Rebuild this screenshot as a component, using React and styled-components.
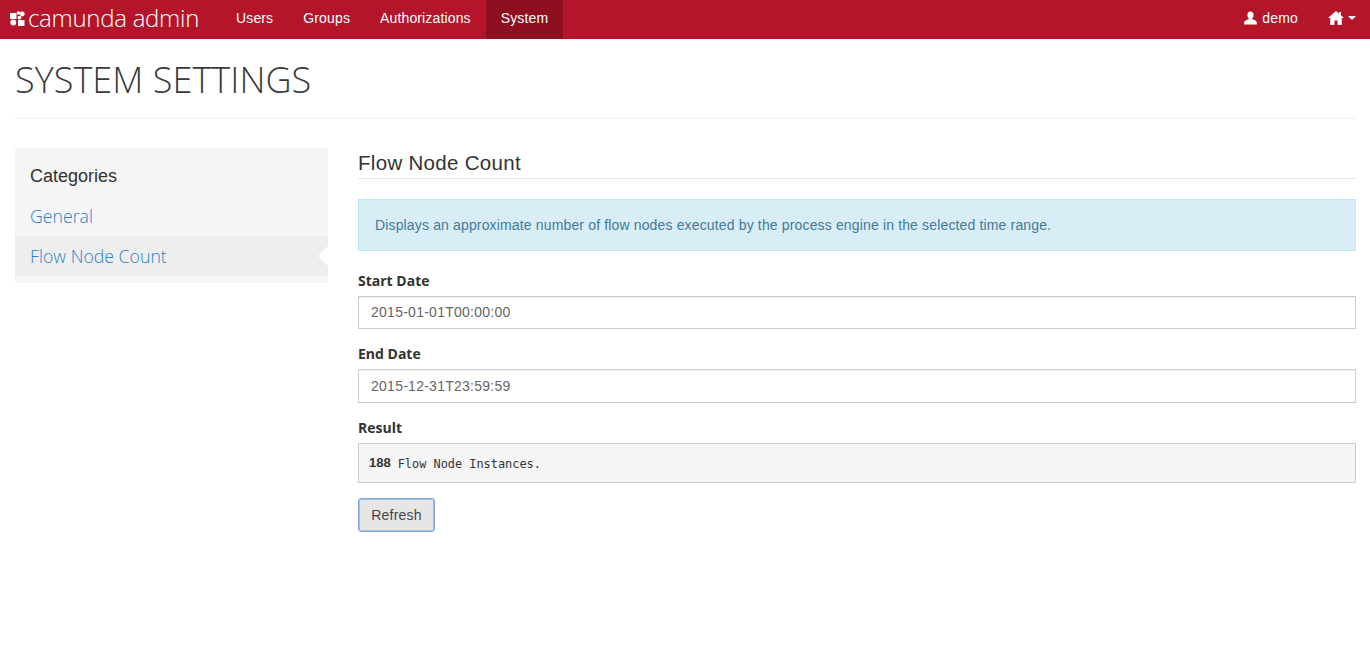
import React from "react";
import styled, { createGlobalStyle } from "styled-components";

const Global = createGlobalStyle`
  html, body { margin: 0; padding: 0; background: #fff; }
  body { font-family: "Liberation Sans", Arial, sans-serif; font-size: 14px; color: #333; line-height: 20px; }
  * { box-sizing: border-box; }
`;

const Navbar = styled.nav`
  height: 39px;
  background: #b5152b;
  display: flex;
  align-items: stretch;
  color: #fff;
`;
const Brand = styled.a`
  display: flex;
  align-items: center;
  gap: 3px;
  padding: 0 0 3px 10px;
  width: 221px;
  font-family: "Open Sans", sans-serif;
  font-weight: 300;
  font-size: 24px;
  letter-spacing: -0.28px;
  color: #fff;
`;
const NavList = styled.div`
  display: flex;
  align-items: stretch;
`;
const NavItem = styled.a`
  display: flex;
  align-items: center;
  padding: 0 15px 3px;
  letter-spacing: 0.14px;
  color: #fff;
  background: ${(p) => (p.$active ? "#8e0f20" : "transparent")};
`;
const NavRight = styled.div`
  margin-left: auto;
  display: flex;
  align-items: center;
  padding: 0 14px 3px 0;
`;
const UserLink = styled.a`
  display: flex;
  align-items: center;
  gap: 5px;
  margin-right: 30px;
  letter-spacing: 0.16px;
  color: #fff;
`;
const HomeLink = styled.a`
  display: flex;
  align-items: center;
  gap: 4px;
`;
const Caret = styled.span`
  border-top: 4px solid #fff;
  border-left: 4px solid transparent;
  border-right: 4px solid transparent;
`;
const Main = styled.main`
  padding: 0 14px 0 15px;
`;
const PageHeader = styled.header`
  height: 80px;
  border-bottom: 1px solid #eee;
  padding-top: 17px;
`;
const PageTitle = styled.h1`
  margin: 0;
  font-family: "Open Sans", sans-serif;
  font-weight: 300;
  font-size: 36px;
  line-height: 48px;
  letter-spacing: 0.05px;
  color: #3a3a3a;
  text-transform: uppercase;
`;
const Columns = styled.div`
  display: grid;
  grid-template-columns: 313px 1fr;
  column-gap: 30px;
  margin-top: 29px;
`;
const Sidebar = styled.aside`
  background: #f5f5f5;
  height: 135px;
  padding: 8px 0 7px;
  align-self: start;
`;
const SideHead = styled.div`
  font-family: "Liberation Sans", Arial, sans-serif;
  font-size: 18px;
  line-height: 40px;
  padding-left: 15px;
  color: #333;
`;
const SideItem = styled.a`
  display: block;
  position: relative;
  height: 40px;
  line-height: 40px;
  padding-left: 15px;
  font-family: "Open Sans", sans-serif;
  font-weight: 300;
  font-size: 17.7px;
  color: #2a7fd0;
  background: ${(p) => (p.$active ? "#eeeeee" : "transparent")};
  ${(p) =>
    p.$active &&
    `&::after {
      content: "";
      position: absolute;
      right: 0;
      top: 10px;
      border-top: 10px solid transparent;
      border-bottom: 10px solid transparent;
      border-right: 10px solid #fff;
    }`}
`;
const Content = styled.section`
  min-width: 0;
`;
const SectionTitle = styled.h3`
  margin: 0;
  height: 31px;
  font-family: "Liberation Sans", Arial, sans-serif;
  font-weight: 400;
  font-size: 20.5px;
  line-height: 30px;
  letter-spacing: 0.3px;
  border-bottom: 1px solid #e5e5e5;
  color: #333;
`;
const Alert = styled.div`
  margin-top: 20px;
  height: 52px;
  padding: 0 15px 0 16px;
  display: flex;
  align-items: center;
  background: #d9edf7;
  border: 1px solid #bce8f1;
  letter-spacing: 0.15px;
  color: #3f7b99;
`;
const Field = styled.div`
  margin-top: 19.6px;
  & + & { margin-top: 15px; }
`;
const Label = styled.label`
  display: block;
  font-family: "Open Sans", sans-serif;
  font-weight: 700;
  font-size: 14px;
  line-height: 20px;
  margin-bottom: 5px;
  color: #333;
`;
const Input = styled.input`
  display: block;
  width: 100%;
  height: 33.6px;
  padding: 5px 12px;
  border: 1px solid #ccc;
  box-shadow: inset 0 1px 1px rgba(0, 0, 0, 0.075);
  font-family: "Liberation Sans", Arial, sans-serif;
  font-size: 14px;
  letter-spacing: 0.26px;
  color: #666;
  background: #fff;
  outline: none;
  border-radius: 0;
`;
const ResultBox = styled.div`
  height: 40px;
  padding: 2px 10px 0;
  display: flex;
  align-items: center;
  gap: 7px;
  background: #f5f5f5;
  border: 1px solid #ccc;
`;
const Count = styled.strong`
  font-family: "Liberation Sans", Arial, sans-serif;
  font-size: 13px;
  margin-top: -2px;
  color: #333;
`;
const Mono = styled.span`
  font-family: "DejaVu Sans Mono", monospace;
  font-size: 11.9px;
  color: #333;
`;
const Button = styled.button`
  display: block;
  margin-top: 15px;
  height: 34px;
  width: 77px;
  padding: 0;
  background: #e6e6e6;
  border: 1px solid #7fa6e6;
  border-radius: 3px;
  box-shadow: inset 0 0 0 1px #a9bbd8;
  font-family: "Liberation Sans", Arial, sans-serif;
  font-size: 14px;
  letter-spacing: 0.2px;
  color: #444;
`;

const Logo = () => (
  <svg width="15" height="15" viewBox="0 0 15 15" fill="#fff">
    <rect x="0" y="2" width="6.5" height="6" />
    <circle cx="8.5" cy="2" r="1.8" />
    <circle cx="12.3" cy="3" r="2.4" />
    <circle cx="9.5" cy="6.6" r="1.9" />
    <circle cx="3.3" cy="11.5" r="2.9" />
    <rect x="8" y="9" width="6.5" height="6" />
  </svg>
);
const UserIcon = () => (
  <svg width="13" height="14" viewBox="0 0 14 14" fill="#fff">
    <path d="M7 0C4.9 0 3.7 1.6 3.7 3.7c0 1.5.6 2.9 1.5 3.6v.9C3.5 9.2.4 9.7.2 11.8V14h13.6v-2.2c-.2-2.1-3.3-2.6-5-3.6v-.9c.9-.7 1.5-2.1 1.5-3.6C10.3 1.6 9.1 0 7 0z" />
  </svg>
);
const HomeIcon = () => (
  <svg width="16" height="14" viewBox="0 0 16 14" fill="#fff">
    <path d="M8 0L0 7h2.2v7h4.3V9.5h3V14h4.3V7H16l-3-2.6V1h-2v1.7z" />
  </svg>
);

export default function App() {
  return (
    <>
      <Global />
      <Navbar>
        <Brand>
          <Logo />
          camunda admin
        </Brand>
        <NavList>
          <NavItem>Users</NavItem>
          <NavItem>Groups</NavItem>
          <NavItem>Authorizations</NavItem>
          <NavItem $active>System</NavItem>
        </NavList>
        <NavRight>
          <UserLink>
            <UserIcon />
            demo
          </UserLink>
          <HomeLink>
            <HomeIcon />
            <Caret />
          </HomeLink>
        </NavRight>
      </Navbar>
      <Main>
        <PageHeader>
          <PageTitle>System Settings</PageTitle>
        </PageHeader>
        <Columns>
          <Sidebar>
            <SideHead>Categories</SideHead>
            <SideItem>General</SideItem>
            <SideItem $active>Flow Node Count</SideItem>
          </Sidebar>
          <Content>
            <SectionTitle>Flow Node Count</SectionTitle>
            <Alert>Displays an approximate number of flow nodes executed by the process engine in the selected time range.</Alert>
            <Field>
              <Label>Start Date</Label>
              <Input readOnly value="2015-01-01T00:00:00" />
            </Field>
            <Field>
              <Label>End Date</Label>
              <Input readOnly value="2015-12-31T23:59:59" />
            </Field>
            <Field>
              <Label>Result</Label>
              <ResultBox>
                <Count>188</Count>
                <Mono>Flow Node Instances.</Mono>
              </ResultBox>
            </Field>
            <Button>Refresh</Button>
          </Content>
        </Columns>
      </Main>
    </>
  );
}
